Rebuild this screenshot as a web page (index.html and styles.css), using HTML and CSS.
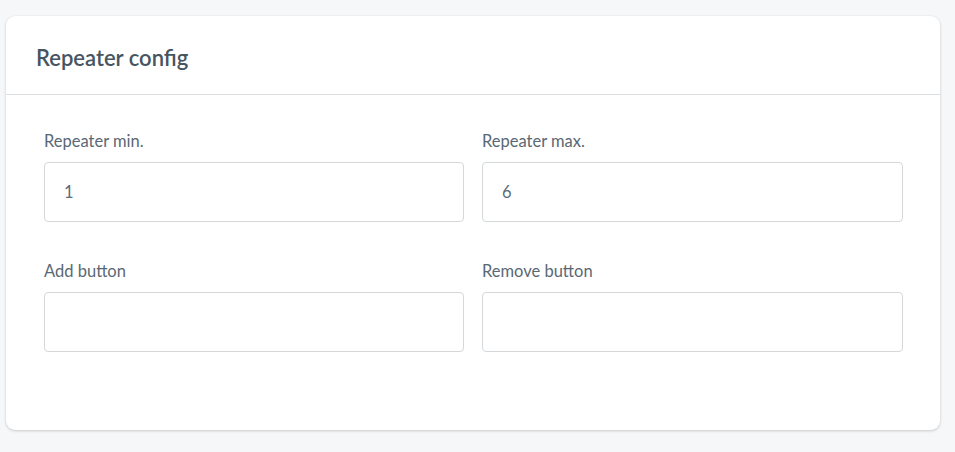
FILE: index.html
```html
<!DOCTYPE html>
<html>
<head>
<meta charset="utf-8">
<link rel="stylesheet" href="styles.css">
</head>
<body>
<div class="card">
  <div class="card-header">
    <h2 class="card-title">Repeater config</h2>
  </div>
  <div class="card-body">
    <div class="grid">
      <div class="field">
        <label class="label">Repeater min.</label>
        <input class="input" type="text" value="1">
      </div>
      <div class="field">
        <label class="label">Repeater max.</label>
        <input class="input" type="text" value="6">
      </div>
      <div class="field">
        <label class="label">Add button</label>
        <input class="input" type="text" value="">
      </div>
      <div class="field">
        <label class="label">Remove button</label>
        <input class="input" type="text" value="">
      </div>
    </div>
  </div>
</div>
</body>
</html>
```
FILE: styles.css
```css
html, body {
  margin: 0;
  padding: 0;
  background: #f6f7f9;
  font-family: "Source Sans Pro", Lato, "Noto Sans", sans-serif;
}
body {
  padding: 16px 15px 22px 6px;
}
.card {
  background: #fff;
  border-radius: 9px;
  box-shadow: 0 1px 3px rgba(0,0,0,0.18), 0 0 1px rgba(0,0,0,0.08);
  height: 414px;
  box-sizing: border-box;
}
.card-header {
  height: 78px;
  border-bottom: 1px solid #dcdfe2;
  display: flex;
  align-items: center;
  padding: 0 30px;
}
.card-title {
  margin: 0;
  font-size: 22px;
  font-weight: 600;
  color: #46555f;
  padding-top: 4px;
}
.card-body {
  padding: 36px 37px 0 38px;
}
.grid {
  display: grid;
  grid-template-columns: 420px 421px;
  column-gap: 18px;
  row-gap: 39px;
}
.field {
  display: flex;
  flex-direction: column;
}
.label {
  font-size: 16.5px;
  color: #5a6874;
  line-height: 20px;
  margin-bottom: 11px;
}
.input {
  height: 60px;
  box-sizing: border-box;
  border: 1px solid #d5d8db;
  border-radius: 4px;
  padding: 0 19px;
  font-family: inherit;
  font-size: 16.5px;
  color: #5c6c79;
  background: #fff;
  outline: none;
}
```
